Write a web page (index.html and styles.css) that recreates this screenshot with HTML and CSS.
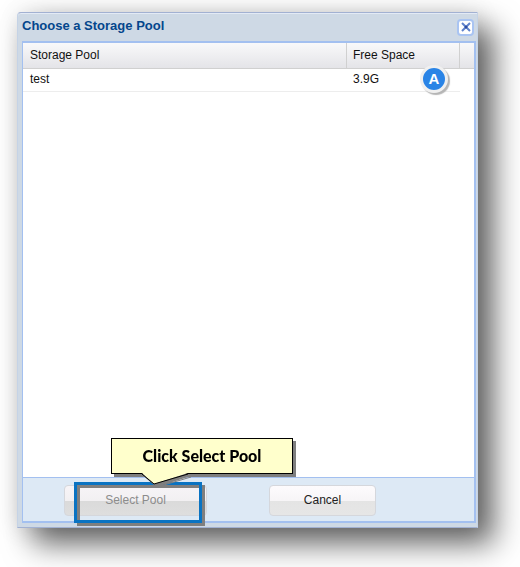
FILE: index.html
```
<!DOCTYPE html>
<html lang="en">
<head>
  <meta charset="utf-8">
  <title>Choose a Storage Pool</title>
  <link rel="stylesheet" href="styles.css">
</head>
<body>
  <main class="dialog">
    <header class="titlebar">
      <h1>Choose a Storage Pool</h1>
      <button type="button" class="close" aria-label="Close">
        <svg width="10" height="10" viewBox="0 0 10 10">
          <path d="M1 1 L9 9 M9 1 L1 9" stroke="#5f82cc" stroke-width="2" fill="none"/>
          <circle cx="5" cy="5" r="1.5" fill="#2c4ca0"/>
        </svg>
      </button>
    </header>
    <div class="panel">
      <div class="grid">
        <table>
          <colgroup>
            <col>
            <col class="col-space">
            <col class="col-end">
          </colgroup>
          <thead>
            <tr>
              <th>Storage Pool</th>
              <th>Free Space</th>
              <th></th>
            </tr>
          </thead>
          <tbody>
            <tr>
              <td>test</td>
              <td class="space">3.9G<span class="marker">A</span></td>
            </tr>
          </tbody>
        </table>
      </div>
      <footer class="buttons">
        <div class="target">
          <button type="button" class="btn btn-select" disabled>Select Pool</button>
          <div class="highlight"></div>
          <div class="callout">
            Click Select Pool
            <svg class="tail" width="46" height="12" viewBox="0 0 46 12">
              <path d="M0 0 L12 11 L46 0" fill="#ffffcc"/>
              <path d="M0 1 L12 11 L46 1" fill="none" stroke="#000"/>
            </svg>
          </div>
        </div>
        <button type="button" class="btn btn-cancel">Cancel</button>
      </footer>
    </div>
  </main>
</body>
</html>
```

FILE: styles.css
```
* {
  box-sizing: border-box;
}
body {
  margin: 0;
  min-height: 100vh;
  padding: 12px 42px 39px 17px;
  display: flex;
  background-color: #fff;
  font-family: "Liberation Sans", Arial, sans-serif;
  font-size: 12px;
  color: #111;
}
.dialog {
  flex: 1;
  display: flex;
  flex-direction: column;
  padding: 0 1px 4px 4px;
  background-color: #ced9e5;
  border: 1px solid #a2b1d2;
  border-right-color: #c5d3e6;
  border-left-color: #c5d3e6;
  border-radius: 4px 0 0 0;
  box-shadow: inset 0 1px 0 #e3eaf5, 16px 16px 30px rgba(0, 0, 0, 0.6), 0 0 24px rgba(0, 0, 0, 0.12);
}
.titlebar {
  display: flex;
  justify-content: space-between;
  align-items: center;
  height: 28px;
}
.titlebar h1 {
  margin: 0;
  padding-bottom: 2px;
  font-size: 13px;
  line-height: 16px;
  color: #04468c;
}
.close {
  display: flex;
  align-items: center;
  justify-content: center;
  width: 17px;
  height: 17px;
  margin-right: 2px;
  padding: 0;
  background-color: #fff;
  border: 2px solid #a9c4f2;
  border-radius: 4px;
  cursor: pointer;
}
.panel {
  flex: 1;
  display: flex;
  flex-direction: column;
  border: 2px solid #a3c0f0;
  border-left-width: 1px;
}
.grid {
  flex: 1;
  background-color: #fff;
}
table {
  width: 100%;
  table-layout: fixed;
  border-collapse: separate;
  border-spacing: 0;
}
.col-space {
  width: 113px;
}
.col-end {
  width: 14px;
}
th {
  height: 26px;
  padding: 0 6px 2px;
  font-weight: normal;
  text-align: left;
  background: linear-gradient(#f9f9fa, #e4e4e8);
  border-right: 1px solid #d0d0d0;
  border-bottom: 1px solid #d0d0d0;
}
th:last-child {
  padding: 0;
  border-right: none;
}
td {
  height: 23px;
  padding: 0 6px 2px;
  border-bottom: 1px solid #ededed;
}
td:first-child,
th:first-child {
  padding-left: 7px;
}
.space {
  position: relative;
}
.marker {
  position: absolute;
  right: 12px;
  top: -4px;
  width: 28px;
  height: 28px;
  border: 3px solid #f0f0f0;
  border-radius: 50%;
  background-color: #2a84e6;
  box-shadow: 2px 2px 1px #b5b5b5;
  color: #fff;
  font-size: 15px;
  font-weight: bold;
  line-height: 22px;
  text-align: center;
}
.buttons {
  display: flex;
  gap: 62px;
  padding: 7px 41px 5px;
  background-color: #dde9f5;
  border-top: 1px solid #a3c0f0;
}
.target {
  position: relative;
}
.btn {
  height: 31px;
  padding: 0 0 2px;
  border: 1px solid #d5d7dc;
  border-radius: 4px;
  background: linear-gradient(#fdfbfd 0, #f7f5f7 50%, #e4e4e4 50%, #e6e6e6 100%);
  font-family: inherit;
  font-size: 12px;
  color: #222;
  cursor: pointer;
}
.btn-select {
  width: 143px;
}
.btn-cancel {
  width: 107px;
}
.btn:disabled {
  background: linear-gradient(#f7f4f7 0, #f2f0f2 50%, #dadada 50%, #dedede 100%);
  color: #8c8c8c;
  cursor: default;
}
.highlight {
  position: absolute;
  left: 10px;
  top: -3px;
  width: 128px;
  height: 41px;
  border: 3px solid #0a73c2;
  filter: drop-shadow(3px 3px 0 #7f7f7f);
}
.callout {
  position: absolute;
  left: 47px;
  bottom: 42px;
  width: 182px;
  height: 36px;
  border: 1px solid #000;
  background-color: #ffffcc;
  color: #000;
  font-family: Lato, "Open Sans", sans-serif;
  font-size: 16px;
  font-weight: 900;
  line-height: 34px;
  text-align: center;
  white-space: nowrap;
  filter: drop-shadow(3px 3px 0 #7f7f7f);
}
.tail {
  position: absolute;
  left: 30px;
  top: 34px;
}
```
